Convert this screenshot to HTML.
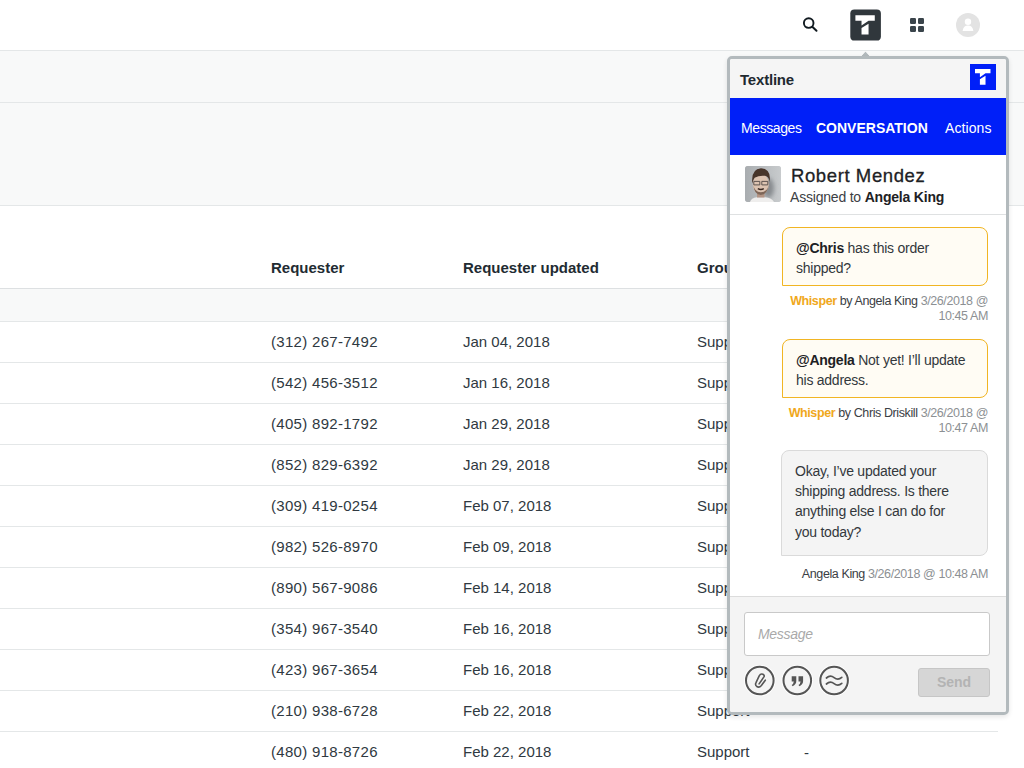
<!DOCTYPE html>
<html><head><meta charset="utf-8">
<style>
*{margin:0;padding:0;box-sizing:border-box}
html,body{width:1024px;height:768px;overflow:hidden;background:#fff;font-family:"Liberation Sans",sans-serif;color:#2f3941}
.abs{position:absolute}
.hline{position:absolute;left:0;height:1px;background:#e4e7e8}
.band{position:absolute;left:0;width:1024px;background:#f8f9f9}
.th{position:absolute;font-weight:bold;font-size:15px;color:#222b32;white-space:nowrap}
.td{position:absolute;font-size:15px;color:#2f3941;white-space:nowrap}
#panel{position:absolute;left:727px;top:56px;width:282px;height:659px;border:3px solid #b3babd;border-radius:5px;background:#fff;box-shadow:0 2px 5px rgba(0,0,0,.1);overflow:hidden}
.pt{position:absolute;white-space:nowrap}
.bub{position:absolute;font-size:14px;line-height:20.2px;letter-spacing:-0.25px;color:#33383c;padding:10px 0 0 13px;border-radius:8px 8px 8px 0;white-space:nowrap}
.bub b{color:#1d2124}
.bub.y{background:#fffcf4;border:1.5px solid #f1b523}
.bub.g{background:#f4f4f4;border:1px solid #dadada}
.meta{position:absolute;right:18px;text-align:right;font-size:12.5px;line-height:15px;letter-spacing:-0.4px;color:#3b4044;white-space:nowrap}
.wh{color:#f0a81c;font-weight:bold}
.gr{color:#8c9093}

</style></head><body>
<!-- top bar -->
<div class="hline" style="top:50px;width:1024px"></div>
<div class="band" style="top:51px;height:51px"></div>
<div class="hline" style="top:102px;width:1024px"></div>
<div class="band" style="top:103px;height:102px"></div>
<div class="hline" style="top:205px;width:1024px"></div>

<!-- icons -->
<svg class="abs" style="left:795px;top:10px" width="30" height="30" viewBox="0 0 30 30">
<circle cx="13.7" cy="13.1" r="4.8" fill="none" stroke="#111a20" stroke-width="1.9"/>
<line x1="17.3" y1="16.7" x2="21.5" y2="20.8" stroke="#111a20" stroke-width="2" stroke-linecap="round"/>
</svg>
<svg class="abs" style="left:849px;top:9px" width="33" height="33" viewBox="0 0 33 33">
<g transform="translate(1.3,0.4) scale(1.02,1.04)">
<rect x="0" y="0" width="30" height="30" rx="4" fill="#30373c"/>
<path d="M5 5.7 H24 V10.8 H17.9 L11 15.4 V10.8 H5 Z M11 17.9 L17.9 13.7 V24.2 H11 Z" fill="#fff"/>
</g></svg>
<svg class="abs" style="left:908px;top:16px" width="18" height="18" viewBox="0 0 18 18">
<rect x="2" y="2" width="6" height="6" rx="1.2" fill="#3a444b"/>
<rect x="10" y="2" width="6" height="6" rx="1.2" fill="#3a444b"/>
<rect x="2" y="10" width="6" height="6" rx="1.2" fill="#3a444b"/>
<rect x="10" y="10" width="6" height="6" rx="1.2" fill="#3a444b"/>
</svg>
<svg class="abs" style="left:956px;top:13px" width="24" height="24" viewBox="0 0 24 24">
<circle cx="12" cy="12" r="12" fill="#e3e3e3"/>
<circle cx="12" cy="8.7" r="3.2" fill="#fff"/>
<path d="M6.6 18 Q7.5 12.6 12 12.6 Q16.5 12.6 17.4 18 Z" fill="#fff"/>
</svg>

<!-- table -->
<div class="th" style="left:271px;top:259px">Requester</div>
<div class="th" style="left:463px;top:259px">Requester updated</div>
<div class="th" style="left:697px;top:259px">Group</div>
<div class="hline" style="top:288px;width:1000px;background:#dde0e2"></div>
<div class="band" style="top:289px;height:32px;width:1000px"></div>
<div class="hline" style="top:321px;width:1000px"></div>

<div class="td" style="left:271px;letter-spacing:0.3px;top:333px">(312) 267-7492</div><div class="td" style="left:463px;top:333px">Jan 04, 2018</div><div class="td" style="left:697px;top:333px">Support</div>
<div class="hline" style="top:362px;width:998px"></div>
<div class="td" style="left:271px;letter-spacing:0.3px;top:374px">(542) 456-3512</div><div class="td" style="left:463px;top:374px">Jan 16, 2018</div><div class="td" style="left:697px;top:374px">Support</div>
<div class="hline" style="top:403px;width:998px"></div>
<div class="td" style="left:271px;letter-spacing:0.3px;top:415px">(405) 892-1792</div><div class="td" style="left:463px;top:415px">Jan 29, 2018</div><div class="td" style="left:697px;top:415px">Support</div>
<div class="hline" style="top:444px;width:998px"></div>
<div class="td" style="left:271px;letter-spacing:0.3px;top:456px">(852) 829-6392</div><div class="td" style="left:463px;top:456px">Jan 29, 2018</div><div class="td" style="left:697px;top:456px">Support</div>
<div class="hline" style="top:485px;width:998px"></div>
<div class="td" style="left:271px;letter-spacing:0.3px;top:497px">(309) 419-0254</div><div class="td" style="left:463px;top:497px">Feb 07, 2018</div><div class="td" style="left:697px;top:497px">Support</div>
<div class="hline" style="top:526px;width:998px"></div>
<div class="td" style="left:271px;letter-spacing:0.3px;top:538px">(982) 526-8970</div><div class="td" style="left:463px;top:538px">Feb 09, 2018</div><div class="td" style="left:697px;top:538px">Support</div>
<div class="hline" style="top:567px;width:998px"></div>
<div class="td" style="left:271px;letter-spacing:0.3px;top:579px">(890) 567-9086</div><div class="td" style="left:463px;top:579px">Feb 14, 2018</div><div class="td" style="left:697px;top:579px">Support</div>
<div class="hline" style="top:608px;width:998px"></div>
<div class="td" style="left:271px;letter-spacing:0.3px;top:620px">(354) 967-3540</div><div class="td" style="left:463px;top:620px">Feb 16, 2018</div><div class="td" style="left:697px;top:620px">Support</div>
<div class="hline" style="top:649px;width:998px"></div>
<div class="td" style="left:271px;letter-spacing:0.3px;top:661px">(423) 967-3654</div><div class="td" style="left:463px;top:661px">Feb 16, 2018</div><div class="td" style="left:697px;top:661px">Support</div>
<div class="hline" style="top:690px;width:998px"></div>
<div class="td" style="left:271px;letter-spacing:0.3px;top:702px">(210) 938-6728</div><div class="td" style="left:463px;top:702px">Feb 22, 2018</div><div class="td" style="left:697px;top:702px">Support</div>
<div class="hline" style="top:731px;width:998px"></div>
<div class="td" style="left:271px;letter-spacing:0.3px;top:743px">(480) 918-8726</div><div class="td" style="left:463px;top:743px">Feb 22, 2018</div><div class="td" style="left:697px;top:743px">Support</div>
<div class="td" style="left:804px;top:744px">-</div>

<!-- panel pointer -->
<svg class="abs" style="left:856px;top:48px" width="20" height="10" viewBox="0 0 20 10">
<polygon points="3.5,9.5 9.5,3 15.5,9.5" fill="#b3babd" stroke="#fff" stroke-width="1"/>
</svg>

<div id="panel">
  <div class="pt" style="left:0;top:0;width:276px;height:39px;background:#f5f5f5"></div>
  <div class="pt" style="left:10px;top:12px;font-weight:bold;font-size:15px;letter-spacing:-0.2px;color:#1f2a30">Textline</div>
  <svg class="pt" style="left:240px;top:5px" width="26" height="26" viewBox="0 0 26 26">
  <rect width="26" height="26" fill="#001ff8"/>
  <g transform="translate(5,4.9) scale(0.816,0.85) translate(-5,-5.7)"><path d="M5 5.7 H24 V10.8 H17.9 L11 15.4 V10.8 H5 Z M11 17.9 L17.9 13.7 V24.2 H11 Z" fill="#fff"/></g>
  </svg>
  <div class="pt" style="left:0;top:39px;width:276px;height:57px;background:#001ff8"></div>
  <div class="pt" style="left:11px;top:61px;font-size:14px;letter-spacing:-0.4px;color:#fff">Messages</div>
  <div class="pt" style="left:86px;top:61px;font-size:14px;font-weight:bold;color:#fff">CONVERSATION</div>
  <div class="pt" style="left:215px;top:61px;font-size:14px;letter-spacing:0.1px;color:#fff">Actions</div>

  <div class="pt" style="left:0;top:96px;width:276px;height:59px;background:#fff"></div>
  <div class="pt" style="left:15px;top:107px;width:36px;height:36px;border-radius:3px;overflow:hidden;background:linear-gradient(90deg,#b9bcbf,#d8dadc 60%,#c4c6c8)">
    <svg width="36" height="36" viewBox="0 0 36 36" style="display:block">
      <defs><filter id="bl" x="-50%" y="-50%" width="200%" height="200%"><feGaussianBlur stdDeviation="2"/></filter>
      <filter id="bl2"><feGaussianBlur stdDeviation="0.45"/></filter>
      <linearGradient id="ag" x1="0" x2="1" y1="0" y2="0"><stop offset="0" stop-color="#a9adb0"/><stop offset="1" stop-color="#c8cbcd"/></linearGradient></defs>
      <rect width="36" height="36" fill="url(#ag)"/>
      <ellipse cx="23.5" cy="22" rx="5.5" ry="10" fill="#878b8f" filter="url(#bl)"/>
      <g filter="url(#bl2)">
      <path d="M5 36 Q6 32 12 31.2 L20 31.2 Q27 32 29 36 Z" fill="#efeeed"/>
      <rect x="12" y="24" width="7.5" height="7.5" fill="#b39484"/>
      <ellipse cx="15.8" cy="18.2" rx="8" ry="10.4" fill="#dcc3b1"/>
      <path d="M7.3 17.5 Q5.8 3 16 2.3 Q26.5 3 24.6 16 Q24 10.5 20 9.8 Q14 9.2 9.6 11.8 Q8 14 7.3 17.5 Z" fill="#47342a"/>
      <path d="M8.5 19.5 Q9 28.5 15.8 29 Q22.5 28.5 23.5 19.5 Q22.5 26 15.8 26.3 Q9.5 26 8.5 19.5 Z" fill="#7e6658"/>
      <path d="M8.8 15.4 h6 v3.5 h-6 Z M16.8 15.4 h6 v3.5 h-6 Z" fill="none" stroke="#504846" stroke-width="0.9"/>
      <path d="M12.8 22.6 Q15.8 24.2 18.8 22.6" stroke="#3a2a24" stroke-width="1.5" fill="none"/>
      </g>
    </svg>
  </div>
  <div class="pt" style="left:61px;top:107px;font-size:18.5px;line-height:20px;letter-spacing:0.6px;-webkit-text-stroke:0.3px #1d2124;color:#1d2124">Robert Mendez</div>
  <div class="pt" style="left:60px;top:129px;font-size:14px;line-height:18px;letter-spacing:-0.2px;color:#3b4044">Assigned to <b style="color:#1d2124">Angela King</b></div>
  <div class="pt" style="left:0;top:155px;width:276px;height:1px;background:#dfe1e2"></div>

  <div class="bub y" style="left:52px;top:168px;width:206px;height:59px"><b>@Chris</b> has this order<br>shipped?</div>
  <div class="meta" style="top:235px"><span class="wh">Whisper</span> by Angela King <span class="gr">3/26/2018 @</span><br><span class="gr">10:45 AM</span></div>

  <div class="bub y" style="left:52px;top:280px;width:206px;height:59px"><b>@Angela</b> Not yet! I’ll update<br>his address.</div>
  <div class="meta" style="top:347px"><span class="wh">Whisper</span> by Chris Driskill <span class="gr">3/26/2018 @</span><br><span class="gr">10:47 AM</span></div>

  <div class="bub g" style="left:51px;top:391px;width:207px;height:106px">Okay, I’ve updated your<br>shipping address. Is there<br>anything else I can do for<br>you today?</div>
  <div class="meta" style="top:508px">Angela King <span class="gr">3/26/2018 @ 10:48 AM</span></div>

  <div class="pt" style="left:0;top:537px;width:276px;height:1px;background:#dcdcdc"></div>
  <div class="pt" style="left:0;top:538px;width:276px;height:120px;background:#f4f4f4"></div>
  <div class="pt" style="left:14px;top:553px;width:246px;height:44px;background:#fff;border:1px solid #c9c9c9;border-radius:3px"></div>
  <div class="pt" style="left:28px;top:567px;font-size:14px;line-height:16px;font-style:italic;letter-spacing:-0.3px;color:#a9a9a9">Message</div>
  <svg class="pt" style="left:14px;top:606px" width="106" height="32" viewBox="0 0 106 32">
    <g fill="none" stroke="#fff" stroke-width="1.6" opacity="0.9"><circle cx="15.8" cy="15.5" r="15"/><circle cx="53.3" cy="15.5" r="15"/><circle cx="90.1" cy="15.5" r="15"/></g>
    <g fill="none" stroke="#555" stroke-width="2"><circle cx="15.8" cy="15.5" r="13.8"/><circle cx="53.3" cy="15.5" r="13.8"/><circle cx="90.1" cy="15.5" r="13.8"/></g>
    <g transform="translate(15.8,15.3)" fill="none" stroke="#555" stroke-width="1.6" stroke-linecap="round" stroke-linejoin="round">
      <path d="M5.5 -0.1 L1.6 5.2 Q-0.6 7.8 -3 6.2 Q-5 4.6 -3.8 2.3 L-0.6 -4.4 Q0.8 -7 3.1 -6.1 Q5.1 -5 4.1 -3.4 L-0.7 3.6"/>
    </g>
    <path d="M47.7 11.2 h4.6 v4.8 Q52.3 19.6 48.6 21.2 L47.7 20 Q49.6 18.6 49.8 16.4 H47.7 Z M54.5 11.2 h4.6 v4.8 Q59.1 19.6 55.4 21.2 L54.5 20 Q56.4 18.6 56.6 16.4 H54.5 Z" fill="#555"/>
    <path d="M82.4 13.0 Q86.2 9.6 90.1 12.6 Q94 15.6 97.8 12.3 M82.4 19.0 Q86.2 15.6 90.1 18.6 Q94 21.6 97.8 18.3" fill="none" stroke="#555" stroke-width="1.7" stroke-linecap="round"/>
  </svg>
  <div class="pt" style="left:188px;top:609px;width:72px;height:29px;background:#d6d6d6;border:1px solid #c6c6c6;border-radius:3px;font-weight:bold;font-size:14px;line-height:27px;text-align:center;color:#b3b3b3">Send</div>
</div>
</body></html>
